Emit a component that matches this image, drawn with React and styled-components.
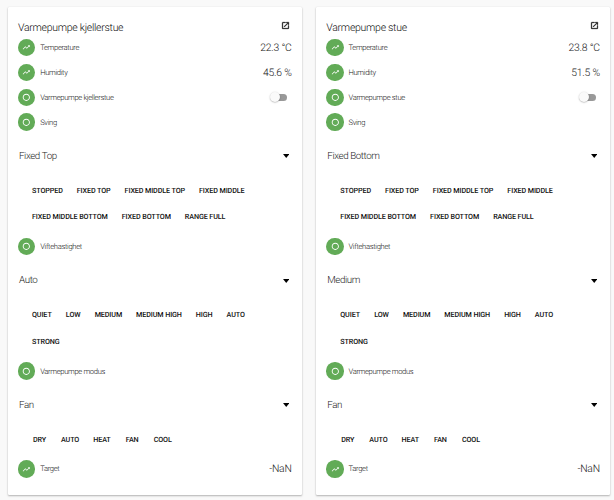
import React from "react";
import styled, { createGlobalStyle } from "styled-components";

const GlobalStyle = createGlobalStyle`
  * { box-sizing: border-box; }
  body {
    margin: 0;
    background: #f9f9f9;
    font-family: Roboto, "Liberation Sans", sans-serif;
    font-weight: 300;
    color: #252525;
    overflow: hidden;
    text-rendering: geometricPrecision;
    -webkit-font-smoothing: antialiased;
  }
`;

const Board = styled.main`
  display: flex;
  gap: 14.7px;
  width: 614px;
  height: 500px;
  padding: 7px 0 0 8px;
`;

const Card = styled.section`
  display: flex;
  flex-direction: column;
  flex: none;
  width: 293.6px;
  height: 488px;
  padding: 12px 10px 0;
  background: #fff;
  border-radius: 1px;
  box-shadow: 0 1px 2px rgba(0, 0, 0, 0.28), 0 0 1px rgba(0, 0, 0, 0.15);
`;

const CardHeader = styled.header`
  display: flex;
  flex: none;
  align-items: center;
  justify-content: space-between;
  height: 16.4px;
  padding-right: 1.2px;
`;

const Title = styled.h2`
  margin: 1px 0 0;
  font-size: 10.5px;
  font-weight: 300;
  line-height: 16px;
  letter-spacing: -0.28px;
  color: #101010;
`;

const OpenIcon = styled.svg`
  width: 9px;
  height: 9px;
  margin-top: -3px;
  fill: #111;
`;

const EntityRow = styled.div`
  display: flex;
  flex: none;
  align-items: center;
  height: 24.8px;
`;

const Badge = styled.span`
  display: flex;
  flex: none;
  align-items: center;
  justify-content: center;
  width: 17.4px;
  height: 17.4px;
  margin-right: 4.8px;
  border-radius: 50%;
  background: #62ab57;
`;

const BadgeIcon = styled.svg`
  width: 8.6px;
  height: 8.6px;
  fill: #fff;
`;

const EntityName = styled.span`
  flex: 1;
  padding-top: 1px;
  font-size: 7.6px;
  line-height: 12px;
  letter-spacing: -0.33px;
  color: #181818;
`;

const Reading = styled.span`
  padding-top: 1px;
  font-size: 10.4px;
  line-height: 14px;
  letter-spacing: -0.23px;
  color: #202020;
`;

const Switch = styled.span`
  display: flex;
  align-items: center;
  width: 15px;
  height: 7px;
  margin-right: 4.3px;
  border-radius: 4px;
  background: #999;
`;

const Knob = styled.span`
  width: 10px;
  height: 10px;
  margin-left: -2px;
  flex: none;
  border-radius: 50%;
  background: #fafafa;
  box-shadow: 0 0.5px 1.5px rgba(0, 0, 0, 0.35);
`;

const Select = styled.div`
  display: flex;
  flex: none;
  align-items: center;
  justify-content: space-between;
  height: 42.3px;
  padding: 0.8px 2.4px 0 1px;
  font-size: 9.8px;
  letter-spacing: -0.4px;
`;

const Caret = styled.svg`
  width: 6.4px;
  height: 4.2px;
  fill: #000;
`;

const Options = styled.div`
  display: flex;
  flex: none;
  flex-wrap: wrap;
  width: 240px;
  margin: 0 0 4px 7px;
`;

const OptionButton = styled.button`
  height: 26.7px;
  min-width: 29px;
  padding: 0 7px;
  border: 0;
  background: none;
  font-family: inherit;
  font-size: 7.2px;
  font-weight: 500;
  letter-spacing: -0.11px;
  text-transform: uppercase;
  text-rendering: inherit;
  white-space: nowrap;
  color: #111;
`;

const paths = {
  trend: "M16 6l2.29 2.29-4.88 4.88-4-4L2 16.59 3.41 18l6-6 4 4 6.3-6.29L22 12V6z",
  ring: "M12 2C6.48 2 2 6.48 2 12s4.48 10 10 10 10-4.48 10-10S17.52 2 12 2zm0 17.4a7.4 7.4 0 1 1 0-14.8 7.4 7.4 0 0 1 0 14.8z",
  open: "M19 19H5V5h7V3H5a2 2 0 0 0-2 2v14a2 2 0 0 0 2 2h14c1.1 0 2-.9 2-2v-7h-2v7zM14 3v2h3.59l-9.83 9.83 1.41 1.41L19 6.41V10h2V3h-7z",
};

function Entity({ icon = "ring", name, children }) {
  return (
    <EntityRow>
      <Badge>
        <BadgeIcon viewBox="0 0 24 24">
          <path d={paths[icon]} />
        </BadgeIcon>
      </Badge>
      <EntityName>{name}</EntityName>
      {children}
    </EntityRow>
  );
}

function Mode({ name, value, options }) {
  return (
    <>
      <Entity name={name} />
      <Select>
        <span>{value}</span>
        <Caret viewBox="0 0 6 4">
          <path d="M0 0h6L3 3.8z" />
        </Caret>
      </Select>
      <Options>
        {options.map((option) => (
          <OptionButton key={option}>{option}</OptionButton>
        ))}
      </Options>
    </>
  );
}

const swingOptions = [
  "Stopped", "Fixed top", "Fixed middle top", "Fixed middle",
  "Fixed middle bottom", "Fixed bottom", "Range full",
];
const fanOptions = ["Quiet", "Low", "Medium", "Medium high", "High", "Auto", "Strong"];
const modeOptions = ["Dry", "Auto", "Heat", "Fan", "Cool"];

const pumps = [
  { title: "Varmepumpe kjellerstue", temperature: "22.3 °C", humidity: "45.6 %", swing: "Fixed Top", fan: "Auto" },
  { title: "Varmepumpe stue", temperature: "23.8 °C", humidity: "51.5 %", swing: "Fixed Bottom", fan: "Medium" },
];

function HeatPumpCard({ pump }) {
  return (
    <Card>
      <CardHeader>
        <Title>{pump.title}</Title>
        <OpenIcon viewBox="0 0 24 24">
          <path d={paths.open} stroke="#111" strokeWidth="0.8" />
        </OpenIcon>
      </CardHeader>
      <Entity icon="trend" name="Temperature">
        <Reading>{pump.temperature}</Reading>
      </Entity>
      <Entity icon="trend" name="Humidity">
        <Reading>{pump.humidity}</Reading>
      </Entity>
      <Entity name={pump.title}>
        <Switch><Knob /></Switch>
      </Entity>
      <Mode name="Sving" value={pump.swing} options={swingOptions} />
      <Mode name="Viftehastighet" value={pump.fan} options={fanOptions} />
      <Mode name="Varmepumpe modus" value="Fan" options={modeOptions} />
      <Entity icon="trend" name="Target">
        <Reading>-NaN</Reading>
      </Entity>
    </Card>
  );
}

export default function App() {
  return (
    <>
      <GlobalStyle />
      <Board>
        {pumps.map((pump) => (
          <HeatPumpCard key={pump.title} pump={pump} />
        ))}
      </Board>
    </>
  );
}
